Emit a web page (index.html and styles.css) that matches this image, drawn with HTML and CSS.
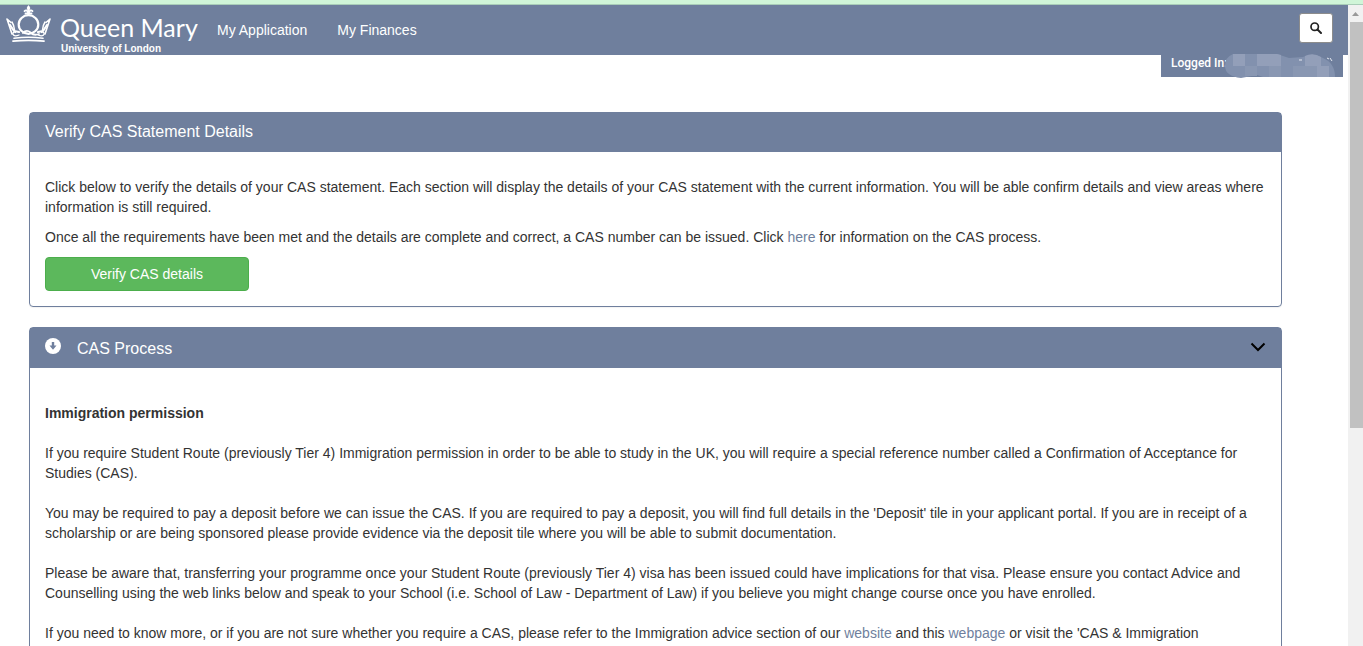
FILE: index.html
```html
<!DOCTYPE html>
<html lang="en">
<head>
<meta charset="utf-8">
<title>Verify CAS Statement Details</title>
<link rel="stylesheet" href="styles.css">
</head>
<body>
<div class="notice-strip"></div>
<div class="viewport">
  <div class="page">
    <header class="navbar">
      <a class="brand" href="#">
        <svg class="crown" viewBox="0 0 46 38" aria-hidden="true">
          <g fill="none" stroke="#fff" stroke-linecap="round" stroke-linejoin="round">
            <path d="M7 36.2Q22.500 34.400 38 36.200" stroke-width="1.800"/>
            <path d="M8 33.300Q22.500 31 37 33.300" stroke-width="1.500"/>
            <ellipse cx="22.500" cy="19.500" rx="9.800" ry="9.300" stroke-width="2.200"/>
            <path d="M17 28Q20.500 24 24.500 27.500Q28 31 33 29" stroke-width="1.800"/>
            <path d="M13 30Q8 32 6.800 29Q7 26.500 9.500 27.500M32 30Q37 32 38.200 29Q38 26.500 35.500 27.500" stroke-width="1.300"/>
            <path d="M6 29L1 14L5 17.500M39 29L44 14L40 17.500" stroke-width="1.600"/>
            <path d="M4 20L8 26L13 27M41 20L37 26L32 27" stroke-width="2.200"/>
            <path d="M6 17Q8 20 8.500 25M39 17Q37 20 36.500 25" stroke-width="1.500"/>
            <path d="M22.500 2V10M19.500 8.500H25.500" stroke-width="1.800"/>
            <path d="M22 7.500Q20.500 4 18.500 6.200M23 7.500Q24.500 4 26.500 6.200" stroke-width="1.800"/>
          </g>
          <path d="M22.500 0L24.300 3L22.500 7L20.700 3Z" fill="#fff"/>
        </svg>
        <span class="brand-text">
          <span class="brand-name">Queen Mary</span>
          <span class="brand-sub">University of London</span>
        </span>
      </a>
      <nav class="nav-links">
        <a href="#">My Application</a>
        <a href="#">My Finances</a>
      </nav>
      <button class="search" type="button" aria-label="Search">
        <svg viewBox="0 0 12 12" width="12" height="12" aria-hidden="true">
          <circle cx="4.700" cy="4.700" r="3.700" fill="none" stroke="#222" stroke-width="1.700"/>
          <path d="M7.500 7.500L11 11" stroke="#222" stroke-width="2" stroke-linecap="round"/>
        </svg>
      </button>
    </header>
    <div class="login-bar">
      <span>Logged In:</span>
      <svg class="redaction" viewBox="0 0 114 24" aria-hidden="true">
        <path d="M10 0H54L66 4L80 3Q90-2 100 4Q112 9 112 23H40L34 21L18 24Q2 22 2 12Q2 3 10 0Z" fill="#8291ae"/>
        <path d="M10 0H22V12H10ZM34 0H46V12H34ZM46 0H54L58 1V12H46ZM82 2Q90-2 98 3V12H82Z" fill="#939fb9"/>
        <path d="M22 12H34V22H22ZM46 12H58V23H46ZM70 12H94V23H70Z" fill="#8997b2"/>
        <path d="M94 12H106V23H94Z" fill="#939fb9"/>
        <path d="M76 6H79M104 4L106 5M107 4L109 7" stroke="#e4e8f0" stroke-width="1"/>
      </svg>
    </div>
    <main class="content">
      <section class="panel">
        <h2 class="panel-heading">Verify CAS Statement Details</h2>
        <div class="panel-body">
          <p>Click below to verify the details of your CAS statement. Each section will display the details of your CAS statement with the current information. You will be able confirm details and view areas where information is still required.</p>
          <p>Once all the requirements have been met and the details are complete and correct, a CAS number can be issued. Click <a href="#">here</a> for information on the CAS process.</p>
          <button class="btn-verify" type="button">Verify CAS details</button>
        </div>
      </section>
      <section class="panel">
        <h2 class="panel-heading panel-toggle">
          <svg class="down-circle" viewBox="0 0 16 16" aria-hidden="true">
            <circle cx="8" cy="8" r="8" fill="#fff"/>
            <path d="M6.800 4H9.200V7.500H11.500L8 11.800L4.500 7.500H6.800Z" fill="#6f7f9d"/>
          </svg>
          <span>CAS Process</span>
          <svg class="chevron" viewBox="0 0 16 10" aria-hidden="true">
            <path d="M1.500 1.500L8 8L14.500 1.500" fill="none" stroke="#000" stroke-width="2"/>
          </svg>
        </h2>
        <div class="panel-body process">
          <h3>Immigration permission</h3>
          <p>If you require Student Route (previously Tier 4) Immigration permission in order to be able to study in the UK, you will require a special reference number called a Confirmation of Acceptance for Studies (CAS).</p>
          <p>You may be required to pay a deposit before we can issue the CAS. If you are required to pay a deposit, you will find full details in the 'Deposit' tile in your applicant portal. If you are in receipt of a scholarship or are being sponsored please provide evidence via the deposit tile where you will be able to submit documentation.</p>
          <p>Please be aware that, transferring your programme once your Student Route (previously Tier 4) visa has been issued could have implications for that visa. Please ensure you contact Advice and Counselling using the web links below and speak to your School (i.e. School of Law - Department of Law) if you believe you might change course once you have enrolled.</p>
          <p>If you need to know more, or if you are not sure whether you require a CAS, please refer to the Immigration advice section of our <a href="#">website</a> and this <a href="#">webpage</a> or visit the 'CAS &amp; Immigration</p>
        </div>
      </section>
    </main>
  </div>
  <div class="scrollbar" aria-hidden="true">
    <svg viewBox="0 0 15 17" width="15" height="17"><path d="M4 11L7.500 7L11 11Z" fill="#999"/></svg>
    <div class="thumb"></div>
  </div>
</div>
</body>
</html>
```

FILE: styles.css
```css
* { box-sizing: border-box; }

body {
  margin: 0;
  height: 100vh;
  overflow: hidden;
  display: flex;
  flex-direction: column;
  background: #fff;
  color: #333;
  font: 14px/20px "Liberation Sans", Arial, sans-serif;
}

a { color: #6f7f9d; text-decoration: none; }
h2, h3, p { margin: 0; }

.notice-strip {
  flex: none;
  height: 5px;
  background: #d0f5d8;
  border-bottom: 1px solid #a9cdb8;
}

.viewport { flex: 1; min-height: 0; display: flex; }
.page { flex: 1; min-width: 0; overflow: hidden; display: flex; flex-direction: column; }

.navbar {
  flex: none;
  height: 50px;
  display: flex;
  align-items: flex-start;
  padding: 0 15px 0 6px;
  background: #6f7f9d;
}
.brand { display: flex; gap: 8px; width: 211px; color: #fff; }
.crown { flex: none; width: 46px; height: 38px; }
.brand-text { display: flex; flex-direction: column; padding-top: 7px; white-space: nowrap; }
.brand-name { font: 400 25px/31px Lato, sans-serif; }
.brand-sub { padding-left: 1px; font: bold 10px/12px "Liberation Sans", Arial, sans-serif; }
.nav-links { display: flex; gap: 30px; padding-top: 15px; }
.nav-links a { color: #fff; }

.search {
  margin: 8px 0 0 auto;
  width: 34px;
  height: 30px;
  padding: 0;
  display: flex;
  align-items: center;
  justify-content: center;
  background: #fff;
  border: 1px solid #8c8c8c;
  border-radius: 3px;
}

.login-bar {
  flex: none;
  align-self: flex-end;
  display: flex;
  width: 182px;
  height: 22px;
  margin-right: 5px;
  padding-left: 10px;
  background: #6f7f9d;
  color: #fff;
  font: 500 12px/16px Roboto, sans-serif;
}
.redaction { flex: none; width: 114px; height: 24px; margin: -1px 0 0 -4px; }

.content {
  display: flex;
  flex-direction: column;
  gap: 20px;
  padding: 35px 66px 0 29px;
}

.panel {
  border: 1px solid #6f7f9d;
  border-radius: 4px;
  box-shadow: 0 1px 1px rgba(0, 0, 0, .05);
}
.panel-heading {
  padding: 9px 15px 11px;
  background: #6f7f9d;
  color: #fff;
  font-size: 16px;
  font-weight: normal;
  line-height: 19px;
}
.panel-toggle { display: flex; gap: 16px; padding: 10px 15px 8px; line-height: 22px; }
.down-circle { width: 16px; height: 16px; }
.chevron { width: 16px; height: 10px; margin: 4px 0 0 auto; }

.panel-body { padding: 25px 15px 15px; }
.panel-body p { margin-bottom: 10px; }
.btn-verify {
  display: block;
  width: 204px;
  height: 34px;
  padding: 0;
  background: #5cb85c;
  border: 1px solid #4cae4c;
  border-radius: 4px;
  color: #fff;
  font: inherit;
}

.process { padding-top: 35px; }
.process h3 { margin-bottom: 20px; font-size: 14px; line-height: 20px; }
.process p { margin-bottom: 20px; }

.scrollbar {
  flex: none;
  width: 15px;
  display: flex;
  flex-direction: column;
  background: #f1f1f1;
}
.scrollbar svg { display: block; }
.thumb { height: 406px; margin-left: 2px; background: #c1c1c1; }
```
